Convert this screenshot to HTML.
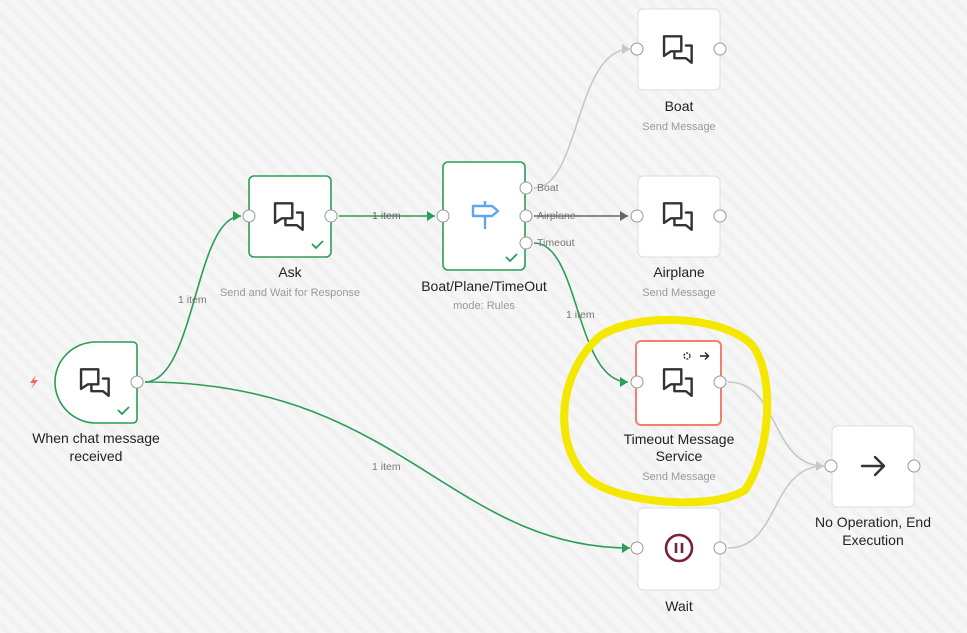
<!DOCTYPE html>
<html><head><meta charset="utf-8"><style>
html,body{margin:0;padding:0;width:967px;height:633px;overflow:hidden;background:#f5f5f5;}
svg{display:block}
text{font-family:"Liberation Sans",sans-serif;}
.t{font-size:14px;fill:#222;text-anchor:middle}
.s{font-size:11px;fill:#999;text-anchor:middle}
.e{font-size:10.5px;fill:#777}
.c{fill:#fff;stroke:#999;stroke-width:1}
</style></head><body>
<svg width="967" height="633" viewBox="0 0 967 633">
<defs>
<pattern id="st" width="12" height="12" patternUnits="userSpaceOnUse" patternTransform="rotate(-45)">
<rect width="12" height="12" fill="#f6f6f6"/><rect width="5" height="12" fill="#f1f1f1"/>
</pattern>
<g id="chat0" fill="none" stroke="#333" stroke-width="2.1" stroke-linejoin="round" stroke-linecap="round">
<path d="M-13,-11 H2 V2 H-7 L-13,6 Z"/>
<path d="M6,-3 H11 V12 L6,8 H-4 V3"/>
</g>
<g id="chat"><use href="#chat0" transform="scale(1.15)"/></g>
</defs>
<rect width="967" height="633" fill="url(#st)"/>

<!-- edges -->
<g fill="none" stroke-width="1.6">
<path d="M145,382 C195,382 195,216 241,216" stroke="#2a9d57"/>
<path d="M145,382 C400,382 450,548 630,548" stroke="#2a9d57"/>
<path d="M339,216 H435" stroke="#2a9d57"/>
<path d="M534,243 C580,243 575,382 628,382" stroke="#2a9d57"/>
<path d="M534,188 C580,188 575,49 630,49" stroke="#c8c8c8"/>
<path d="M534,216 H628" stroke="#666"/>
<path d="M728,382 C780,382 770,466 824,466" stroke="#c8c8c8"/>
<path d="M728,548 C780,548 770,466 824,466" stroke="#c8c8c8"/>
</g>
<g>
<path d="M241,216 l-8,-5 v10z" fill="#2a9d57"/>
<path d="M435,216 l-8,-5 v10z" fill="#2a9d57"/>
<path d="M630,548 l-8,-5 v10z" fill="#2a9d57"/>
<path d="M628,382 l-8,-5 v10z" fill="#2a9d57"/>
<path d="M630,49 l-8,-5 v10z" fill="#c8c8c8"/>
<path d="M628,216 l-8,-5 v10z" fill="#666"/>
<path d="M824,466 l-8,-5 v10z" fill="#c8c8c8"/>
</g>
<g class="e">
<text x="372" y="219" fill="#666">1 item</text>
<text x="178" y="303">1 item</text>
<text x="372" y="470">1 item</text>
<text x="566" y="318">1 item</text>
<text x="537" y="191">Boat</text>
<text x="537" y="219">Airplane</text>
<text x="537" y="246">Timeout</text>
</g>

<!-- nodes -->
<path d="M96,342 H133 a4,4 0 0 1 4,4 V419 a4,4 0 0 1 -4,4 H96 a41,41 0 0 1 -41,-41 a41,40 0 0 1 41,-40z" fill="#fff" stroke="#2a9d57" stroke-width="1.6"/>
<rect x="249" y="176" width="82" height="81" rx="5" fill="#fff" stroke="#2a9d57" stroke-width="1.6"/>
<rect x="443" y="162" width="82" height="108" rx="5" fill="#fff" stroke="#2a9d57" stroke-width="1.6"/>
<rect x="638" y="9" width="82" height="81" rx="5" fill="#fff" stroke="#ddd"/>
<rect x="638" y="176" width="82" height="81" rx="5" fill="#fff" stroke="#ddd"/>
<rect x="636" y="341" width="85" height="84" rx="5" fill="#fff" stroke="#f08070" stroke-width="2"/>
<rect x="638" y="508" width="82" height="82" rx="5" fill="#fff" stroke="#ddd"/>
<rect x="832" y="426" width="82" height="81" rx="5" fill="#fff" stroke="#ddd"/>

<use href="#chat" x="96" y="382"/>
<use href="#chat" x="290" y="216"/>
<use href="#chat" x="679" y="49"/>
<use href="#chat" x="679" y="216"/>
<use href="#chat" x="679" y="382"/>
<!-- signpost -->
<g fill="none" stroke="#5aa9f0" stroke-width="2.4" stroke-linejoin="round">
<path d="M473,206 H492 L498,211 L492,216 H473 Z"/><path d="M485,216 V229"/><path d="M485,201 V206"/>
</g>
<!-- pause -->
<circle cx="679" cy="548" r="13" fill="none" stroke="#7a1f3d" stroke-width="2.6"/>
<path d="M676,543 v10 M682,543 v10" stroke="#7a1f3d" stroke-width="2.6"/>
<!-- arrow -->
<path d="M862,466 H884 M875,457 L884,466 L875,475" fill="none" stroke="#333" stroke-width="2.4" stroke-linecap="round" stroke-linejoin="round"/>
<!-- checks -->
<g fill="none" stroke="#2a9d57" stroke-width="1.8"><path d="M118,410 l4,4 l7,-7"/><path d="M312,244 l4,4 l7,-7"/><path d="M506,257 l4,4 l7,-7"/></g>
<!-- bolt -->
<path d="M36,375 L30,383 H34 L31,389 L38,380 H34 Z" fill="#f06a5a"/>
<!-- top icons timeout -->
<circle cx="687" cy="356" r="3" fill="none" stroke="#222" stroke-width="1.3" stroke-dasharray="2 1.2"/>
<path d="M700,356 h8 M705,352.5 l3.5,3.5 l-3.5,3.5" fill="none" stroke="#222" stroke-width="1.4"/>

<!-- handles -->
<circle class="c" cx="137" cy="382" r="6"/>
<circle class="c" cx="249" cy="216" r="6"/><circle class="c" cx="331" cy="216" r="6"/>
<circle class="c" cx="443" cy="216" r="6"/>
<circle class="c" cx="526" cy="188" r="6"/><circle class="c" cx="526" cy="216" r="6"/><circle class="c" cx="526" cy="243" r="6"/>
<circle class="c" cx="637" cy="49" r="6"/><circle class="c" cx="720" cy="49" r="6"/>
<circle class="c" cx="637" cy="216" r="6"/><circle class="c" cx="720" cy="216" r="6"/>
<circle class="c" cx="637" cy="382" r="6"/><circle class="c" cx="720" cy="382" r="6"/>
<circle class="c" cx="637" cy="548" r="6"/><circle class="c" cx="720" cy="548" r="6"/>
<circle class="c" cx="831" cy="466" r="6"/><circle class="c" cx="914" cy="466" r="6"/>

<!-- labels -->
<text class="t" x="96" y="443">When chat message</text>
<text class="t" x="96" y="461">received</text>
<text class="t" x="290" y="277">Ask</text>
<text class="s" x="290" y="296">Send and Wait for Response</text>
<text class="t" x="484" y="291">Boat/Plane/TimeOut</text>
<text class="s" x="484" y="309">mode: Rules</text>
<text class="t" x="679" y="111">Boat</text>
<text class="s" x="679" y="130">Send Message</text>
<text class="t" x="679" y="277">Airplane</text>
<text class="s" x="679" y="296">Send Message</text>
<text class="t" x="679" y="444">Timeout Message</text>
<text class="t" x="679" y="461">Service</text>
<text class="s" x="679" y="480">Send Message</text>
<text class="t" x="679" y="611">Wait</text>
<text class="t" x="873" y="527">No Operation, End</text>
<text class="t" x="873" y="545">Execution</text>

<!-- yellow circle -->
<path d="M600,336 C640,312 722,315 752,345 C776,375 770,455 745,490 C715,510 625,505 590,480 C555,452 553,378 600,336 C615,326 640,320 665,320" fill="none" stroke="#f5e800" stroke-width="8" stroke-linecap="round"/>
</svg>
</body></html>
